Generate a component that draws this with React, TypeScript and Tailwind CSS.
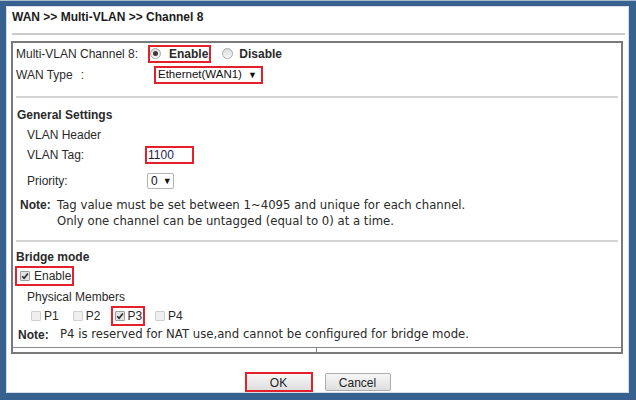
import React from 'react'

const red = 'border-2 border-[#e3212b]'

function Radio({ on }: { on?: boolean }) {
  return (
    <span className="w-[11px] h-[11px] rounded-full border border-[#a8a8a8] bg-gradient-to-b from-[#dcdcdc] to-[#f8f8f8] flex items-center justify-center shrink-0">
      {on && <span className="w-[5px] h-[5px] rounded-full bg-[#3a3a3a]" />}
    </span>
  )
}

function Check({ on }: { on?: boolean }) {
  return (
    <span
      className={`w-[10px] h-[10px] rounded-[1px] border flex items-center justify-center shrink-0 ${
        on ? 'border-[#9c9c9c] bg-[#e4e4e4]' : 'border-[#cfcfcf] bg-[#efefef]'
      }`}
    >
      {on && (
        <svg width="8" height="8" viewBox="0 0 8 8">
          <path d="M1.2 4.2 L3.1 6.2 L6.9 1.4" fill="none" stroke="#2a2a2a" strokeWidth="1.6" />
        </svg>
      )}
    </span>
  )
}

function Caret() {
  return <span className="text-[9px] leading-none text-[#111]">▼</span>
}

const verdana = "font-['DejaVu_Sans',Verdana,sans-serif] text-[11.7px]"

export default function App() {
  return (
    <div className="w-[636px] h-[400px] bg-[#37618f] border-t border-[#a9bbcf] pt-[5px] pl-[6px] pr-[7px] pb-[7px] font-['Liberation_Sans',Arial,sans-serif] text-[12px] text-[#2a2a2a]">
      <div className="h-full bg-white border border-[#d6dde6] flex flex-col">
        {/* Title */}
        <div className="h-[20px] leading-[20px] pl-[5px] font-bold text-[12px] text-[#1c1c1c]">
          WAN &gt;&gt; Multi-VLAN &gt;&gt; Channel 8
        </div>
        <div className="mt-[6px] ml-[5px] mr-[3px] h-[2px] bg-[#cacaca]" />

        {/* Panel */}
        <div className="mt-[6px] ml-[4px] mr-[5px] border-2 border-[#7a7a7a] flex flex-col">
          <div className="h-[21px] flex items-center pl-[3px]">
            <span className="w-[132px]">Multi-VLAN Channel 8:</span>
            <span className={`h-[18px] flex items-center pr-[1px] ${red}`}>
              <Radio on />
              <span className="ml-[8px] font-bold">Enable</span>
            </span>
            <span className="ml-[11px]">
              <Radio />
            </span>
            <span className="ml-[6px] font-bold">Disable</span>
          </div>
          <div className="h-[22px] flex items-center pl-[3px]">
            <span className="w-[138px] flex">
              <span>WAN Type</span>
              <span className="ml-[8px]">:</span>
            </span>
            <span className={`w-[109px] h-[18px] flex items-center pl-[2px] text-[11.5px] text-[#111] ${red}`}>
              Ethernet(WAN1)
              <span className="ml-[6px] flex">
                <Caret />
              </span>
            </span>
          </div>

          <div className="mt-[10px] mx-[3px] h-[2px] bg-[#d4d4d4]" />

          {/* General settings */}
          <div className="mt-[7px] h-[20px] flex items-center pl-[4px] font-bold">General Settings</div>
          <div className="h-[19px] flex items-center pl-[14px]">VLAN Header</div>
          <div className="h-[22px] flex items-center pl-[14px]">
            <span className="w-[118px]">VLAN Tag:</span>
            <span className={`w-[49px] h-[18px] flex items-center pl-[1px] text-[#1e1e4a] ${red}`}>1100</span>
          </div>
          <div className="mt-[6px] h-[18px] flex items-center pl-[14px]">
            <span className="w-[120px]">Priority:</span>
            <span className="w-[27px] h-[16px] border border-[#b4b4b4] rounded-[2px] flex items-center pl-[3px] gap-[5px] text-[#111]">
              0
              <Caret />
            </span>
          </div>
          <div className="mt-[7px] flex pl-[7px] leading-[16px]">
            <span className="w-[37px] shrink-0 font-bold text-[12px]">Note:</span>
            <div className={verdana}>
              <div>Tag value must be set between 1~4095 and unique for each channel.</div>
              <div>Only one channel can be untagged (equal to 0) at a time.</div>
            </div>
          </div>

          <div className="mt-[11px] mx-[3px] h-[2px] bg-[#d4d4d4]" />

          {/* Bridge mode */}
          <div className="mt-[6px] h-[18px] flex items-center pl-[3px] font-bold">Bridge mode</div>
          <div className="h-[20px] flex items-center pl-[2px]">
            <span className={`h-[20px] flex items-center pl-[3px] pr-[1px] ${red}`}>
              <Check on />
              <span className="ml-[4px]">Enable</span>
            </span>
          </div>
          <div className="mt-[2px] h-[18px] flex items-center pl-[14px]">Physical Members</div>
          <div className="h-[20px] flex items-center pl-[18px]">
            <Check />
            <span className="ml-[3px]">P1</span>
            <span className="ml-[14px]">
              <Check />
            </span>
            <span className="ml-[3px]">P2</span>
            <span className={`ml-[11px] h-[20px] flex items-center pl-[2px] pr-[1px] ${red}`}>
              <Check on />
              <span className="ml-[2px]">P3</span>
            </span>
            <span className="ml-[10px]">
              <Check />
            </span>
            <span className="ml-[3px]">P4</span>
          </div>
          <div className="h-[17px] flex items-center pl-[5px]">
            <span className="w-[42px] shrink-0 font-bold text-[12px]">Note:</span>
            <span className={verdana}>P4 is reserved for NAT use,and cannot be configured for bridge mode.</span>
          </div>
          <div className="mt-[4px] h-[5px] border-t border-[#8a8a8a] flex">
            <div className="w-[304px] border-r border-[#8a8a8a]" />
          </div>
        </div>

        {/* Buttons */}
        <div className="mt-[18px] h-[20px] flex justify-center items-center gap-[12px]">
          <button className={`w-[68px] h-[20px] bg-gradient-to-b from-[#f7f7f7] to-[#dedede] text-[#222] ${red}`}>
            OK
          </button>
          <button className="w-[66px] h-[18px] border border-[#adadad] rounded-[2px] bg-gradient-to-b from-[#f7f7f7] to-[#dedede] text-[#222]">
            Cancel
          </button>
        </div>
      </div>
    </div>
  )
}
